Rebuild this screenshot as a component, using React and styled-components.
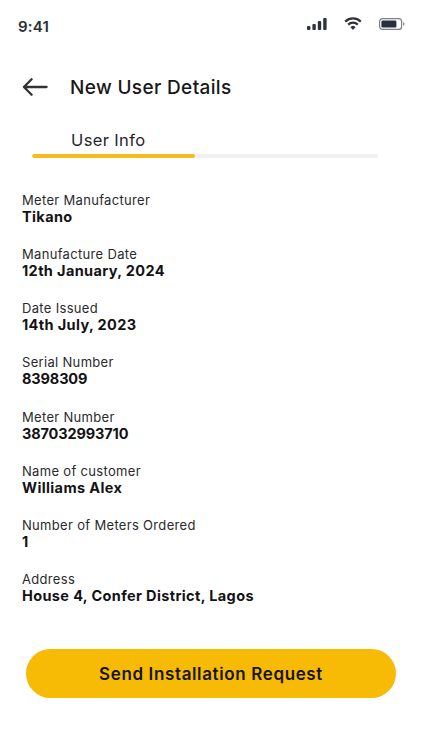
import React from "react";
import styled, { createGlobalStyle } from "styled-components";

const Global = createGlobalStyle`
  html, body { margin: 0; padding: 0; background: #fff; }
  body { font-family: Inter, "Noto Sans", sans-serif; color: #111; }
`;

const Screen = styled.div`
  width: 422px;
  height: 750px;
  overflow: hidden;
  background: #fff;
  display: flex;
  flex-direction: column;
`;

const StatusBar = styled.div`
  height: 54px;
  padding: 17px 17px 0 18px;
  box-sizing: border-box;
  display: flex;
  justify-content: space-between;
  align-items: flex-start;
`;

const Time = styled.span`
  font-size: 15px;
  line-height: 19px;
  font-weight: 600;
  color: #2b2f36;
  letter-spacing: 0.2px;
`;

const StatusIcons = styled.div`
  display: flex;
  align-items: center;
  gap: 17px;
`;

const Header = styled.header`
  display: flex;
  align-items: center;
  gap: 22px;
  height: 34px;
  margin: 16px 0 0 22px;
`;

const Title = styled.h1`
  margin: 1px 0 0;
  font-size: 19px;
  line-height: 34px;
  font-weight: 500;
  color: #17181a;
  letter-spacing: 0.35px;
`;

const TabLabel = styled.div`
  margin: 26px 0 0 71px;
  font-size: 16.5px;
  line-height: 20px;
  font-weight: 400;
  color: #25272b;
  letter-spacing: 0.37px;
`;

const Track = styled.div`
  margin: 4px 0 0 32px;
  width: 346px;
  height: 3.5px;
  border-radius: 2px;
  background: #f1eff0;
  overflow: hidden;
`;

const Fill = styled.div`
  height: 100%;
  width: ${(p) => p.$pct}%;
  background: #f5bc1c;
  border-radius: 2px;
`;

const Details = styled.div`
  margin: 34.5px 0 0 22px;
  display: flex;
  flex-direction: column;
  gap: 17.15px;
`;

const Item = styled.div`
  display: flex;
  flex-direction: column;
  height: 37px;
`;

const Label = styled.span`
  font-size: 13px;
  line-height: 16px;
  font-weight: 400;
  color: #2a2a2d;
  letter-spacing: 0.32px;
`;

const Value = styled.span`
  font-size: 14.5px;
  line-height: 17px;
  font-weight: 700;
  color: #131315;
  letter-spacing: ${(p) => (p.$digits ? "-0.13px" : "0.37px")};
`;

const SendButton = styled.button`
  margin: 41.5px 0 0 26px;
  width: 370px;
  height: 49px;
  border: none;
  border-radius: 25px;
  background: #f8bb05;
  font-family: inherit;
  font-size: 17px;
  font-weight: 600;
  color: #17140a;
  letter-spacing: 0.63px;
`;

const items = [
  ["Meter Manufacturer", "Tikano"],
  ["Manufacture Date", "12th January, 2024"],
  ["Date Issued", "14th July, 2023"],
  ["Serial Number", "8398309", true],
  ["Meter Number", "387032993710", true],
  ["Name of customer", "Williams Alex"],
  ["Number of Meters Ordered", "1"],
  ["Address", "House 4, Confer District, Lagos"],
];

export default function App() {
  return (
    <Screen>
      <Global />
      <StatusBar>
        <Time>9:41</Time>
        <StatusIcons>
          <svg width="20" height="12" viewBox="0 0 20 12" fill="#2f3238">
            <rect x="0" y="8" width="3.4" height="4" rx="1" />
            <rect x="5.4" y="6" width="3.4" height="6" rx="1" />
            <rect x="10.8" y="3" width="3.4" height="9" rx="1" />
            <rect x="16.2" y="0" width="3.4" height="12" rx="1" />
          </svg>
          <svg width="18" height="13" viewBox="0 0 18 13" fill="none" stroke="#2f3238" strokeWidth="2.2">
            <path d="M1.2 4.6a11.2 11.2 0 0 1 15.6 0" />
            <path d="M4.2 7.6a7 7 0 0 1 9.6 0" />
            <path d="M6.9 10.2a3 3 0 0 1 4.2 0L9 12.4z" fill="#2f3238" strokeWidth="1" />
          </svg>
          <svg width="26" height="12" viewBox="0 0 26 12" fill="none">
            <rect x="0.6" y="0.6" width="22" height="10.8" rx="3" stroke="#7c7f86" strokeWidth="1.2" />
            <rect x="2.4" y="2.4" width="15" height="7.2" rx="1.4" fill="#2a2f3c" />
            <path d="M24.2 4.2c.9.3 1.3 1 1.3 1.8s-.4 1.5-1.3 1.8z" fill="#7c7f86" />
          </svg>
        </StatusIcons>
      </StatusBar>
      <Header>
        <svg width="26" height="20" viewBox="0 0 27 20" fill="none" stroke="#333" strokeWidth="2.4" strokeLinecap="round" strokeLinejoin="round">
          <path d="M25.5 10H2M10 2l-8 8 8 8" />
        </svg>
        <Title>New User Details</Title>
      </Header>
      <TabLabel>User Info</TabLabel>
      <Track>
        <Fill $pct={47} />
      </Track>
      <Details>
        {items.map(([label, value, digits]) => (
          <Item key={label}>
            <Label>{label}</Label>
            <Value $digits={digits}>{value}</Value>
          </Item>
        ))}
      </Details>
      <SendButton>Send Installation Request</SendButton>
    </Screen>
  );
}
